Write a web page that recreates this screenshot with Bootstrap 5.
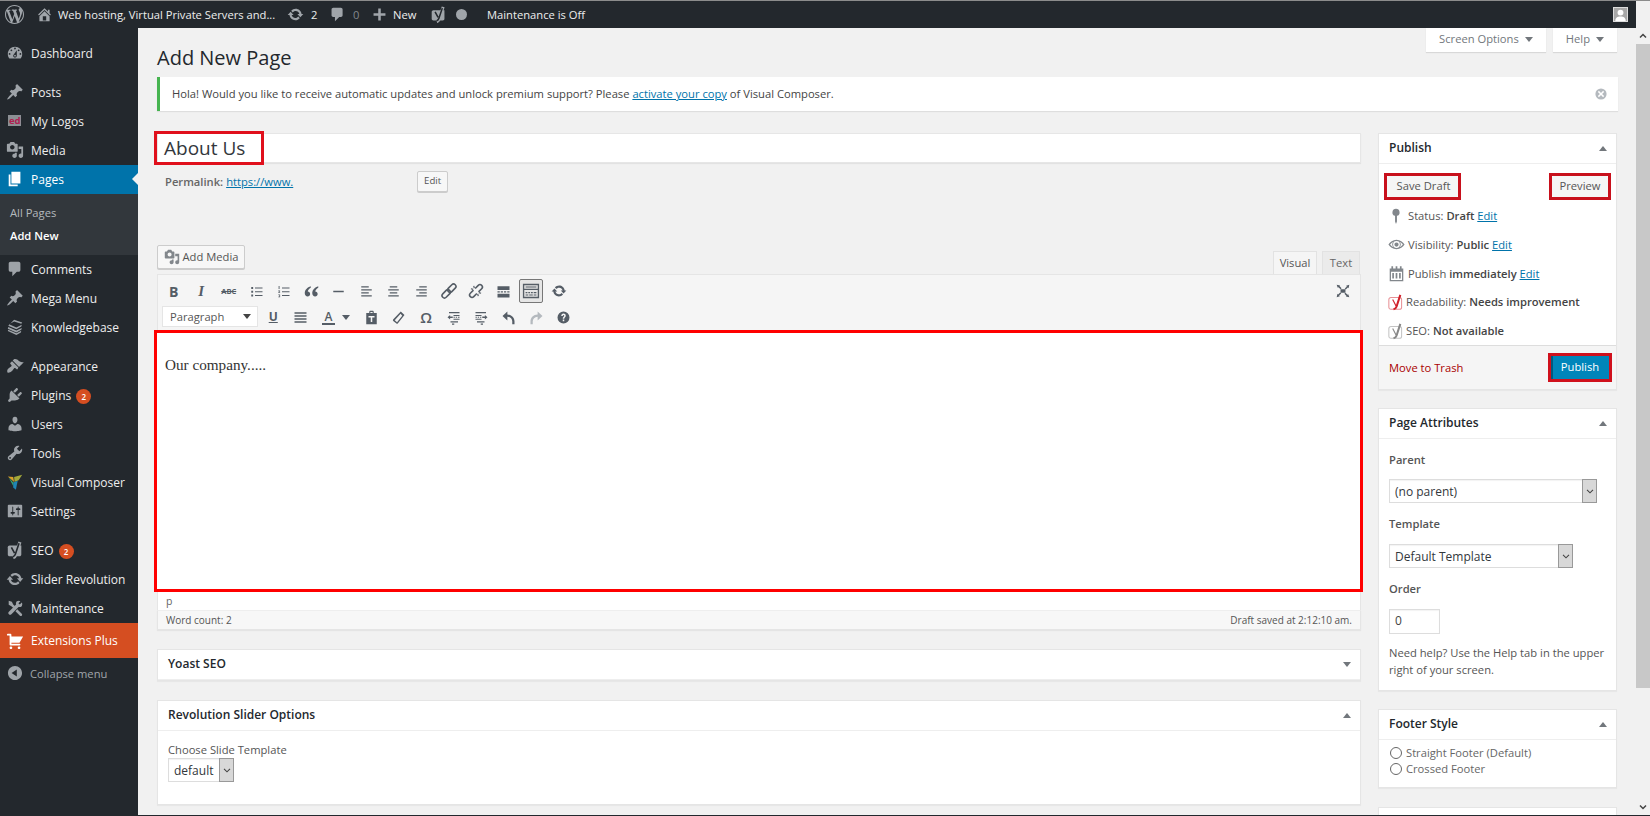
<!DOCTYPE html>
<html lang="en"><head><meta charset="utf-8"><title>Add New Page</title>
<link href="https://cdn.jsdelivr.net/npm/bootstrap@5.3.0/dist/css/bootstrap.min.css" rel="stylesheet">
<style>
html,body{height:816px;overflow:hidden}
body{background:#f1f1f1;color:#444;font:11.2px/1.4 "Open Sans",sans-serif;display:flex;flex-direction:column}
a{color:#0073aa}
svg{display:block;flex:none}
.topline{height:1px;background:#8c8c8c;flex:none}
.botline{height:1px;background:#23282d;flex:none}
.adminbar{height:27px;background:#23282d;color:#eee;flex:none;margin-right:14px;white-space:nowrap;font-size:11.2px}
.adminbar svg{fill:#a0a5aa}
.midrow{flex:1;min-height:0}
.side{width:138px;flex:none;background:#23282d;color:#eee;font-size:12px;padding-top:11px}
.mi{height:29px;padding:2px 0 0 31px;position:relative;white-space:nowrap}
.mi svg{position:absolute;left:6px;top:5px;fill:#9ea3a8}
.mi.sep{margin-top:10px}
.mi.act{background:#0073aa;color:#fff}
.mi.act svg{fill:#fff}
.mi.act::after{content:"";position:absolute;right:0;top:8px;border:6.5px solid transparent;border-right-color:#f1f1f1;border-left:0}
.subm{background:#32373c;height:61px;padding:7px 10px;font-size:11.2px;color:#b4b9be}
.subm div{height:23px;line-height:23px}
.subm .on{color:#fff;font-weight:600}
.mi.ext{background:#d54e21;color:#fff;height:35px}
.mi.ext svg{fill:#fff;top:9px}
.coll{color:#a0a5aa;font-size:11.2px;height:30px;padding-left:30px}
.coll svg{top:6px}
.bdg{background:#d54e21;color:#fff;width:15px;height:15px;border-radius:50%;font-size:8px;font-weight:600;margin-left:5px;display:inline-flex;align-items:center;justify-content:center}
.mainp{flex:1;min-width:0;padding:0 18px 0 19px;overflow:hidden}
.sbar{width:14px;flex:none;background:#f1f1f1}
.sthumb{height:644px;background:#c8c8c8}
.sarrow{height:16px;color:#444}
.sgap{flex:1}
.tabb{background:#fff;height:24px;color:#72777c;box-shadow:0 1px 1px rgba(0,0,0,.1);padding:0 13px 2px;gap:6px}
.tri{width:0;height:0;border:4.5px solid transparent;border-top:5px solid #72777c;border-bottom:0}
.tabwrap{gap:7px;padding-right:1px}
.pgh{font-size:20px;line-height:26px;font-weight:400;color:#23282d;margin:0 0 6px;padding-top:17px}
.noti{height:34px;background:#fff;border-left:3px solid #46b450;box-shadow:0 1px 1px rgba(0,0,0,.08);padding:0 10px 0 12px;margin-bottom:22px}
.noti svg{fill:#b4b9be;margin-left:auto}
.cols{gap:17px;align-items:flex-start}
.lc{width:1204px;flex:none}
.rc{width:239px;flex:none}
.titl{height:30px;background:#fff;box-shadow:0 1px 1px rgba(0,0,0,.06);border:1px solid #e6e6e6}
.titlred{border:3px solid #e0101c;height:34px;width:110px;margin:-3px 0 0 -4px;font-size:19px;line-height:28px;padding-left:7px;color:#32373c;flex:none}
.perm{height:21px;margin:8px 0 53px;padding-left:8px;color:#555}
.perm b{font-weight:600;color:#666}
.perm a{margin-left:3px;width:191px}
.wbtn{background:#f7f7f7;border:1px solid #ccc;box-shadow:0 1px 0 #ccc;color:#555;border-radius:2px;font-size:11.2px;padding:0;--bs-btn-hover-bg:#f7f7f7}
.ebtn{font-size:9.6px;width:31px;height:21px}
.mrow{height:29px;align-items:flex-start}
.mbtn{width:88px;height:24px;gap:3px;font-size:11.2px}
.mbtn svg{fill:#82878c}
.etabs{margin-left:auto;margin-top:6px;gap:5px;margin-right:1px}
.etab{height:23px;width:38px;background:#ebebeb;border:1px solid #e2e2e2;border-bottom:0;color:#666;font-size:11.2px}
.etab.on{width:44px;background:#f5f5f5;color:#555}
.tbar{height:56px;background:#f5f5f5;border:1px solid #e5e5e5;border-bottom:0;padding:4px 3px 0 2px}
.trow{height:24px}
.tb{width:27.5px;height:24px;color:#555d66;flex:none}
.tb svg{fill:#555d66}
.tb b{font:700 14px "Liberation Serif",serif}
.tb.act{border:1px solid #777;background:#e6e6e6;border-radius:2px;width:24px;margin:0 1.8px}
.pick{width:96px;height:21px;margin:1px 1.5px 0 2px;background:#fff;border:1px solid #e5e5e5;padding:0 6px 0 7px;font-size:11.2px;color:#555}
.edred{height:262px;border:3px solid #f00;background:#fff;margin:0 -2px 0 -3px;padding:21px 8px;font:15.2px/1.5 "Liberation Serif",serif;color:#333}
.pathr{height:18px;background:#fff;border-inline:1px solid #e5e5e5;padding-left:8px;font-size:10.5px;color:#666}
.wcnt{height:20px;background:#f7f7f7;border:1px solid #e5e5e5;border-top:1px solid #eee;box-shadow:0 1px 1px rgba(0,0,0,.05);padding:0 8px;font-size:10px;color:#555;margin-bottom:19px}
.mbox{border:1px solid #e5e5e5;border-radius:0;box-shadow:0 1px 1px rgba(0,0,0,.04);background:#fff}
.mhead{height:30px;background:#fff;border:0;border-bottom:1px solid #eee;border-radius:0!important;padding:0 10px;font-size:12px;font-weight:600;color:#23282d}
.mhead i{margin-left:auto;margin-right:-1px;width:0;height:0;border:4.5px solid transparent;border-bottom:5px solid #72777c;border-top:0}
.mhead i.dn{border-bottom:0;border-top:5px solid #72777c}
.lab{font-weight:600;color:#555;font-size:11.2px}
.selx{height:24px;border:1px solid #ddd;background:#fff;box-shadow:inset 0 1px 1px rgba(0,0,0,.05)}
.selx select{appearance:none;border:0;background:transparent;flex:1;min-width:0;font:12px "Open Sans",sans-serif;color:#32373c;padding:0 5px;height:100%;outline:0}
.selx span{width:15px;background:#d8d8d8;border:1px solid #999;margin:-1px -1px -1px 0;flex:none}
.redb{border:3px solid #c8101c;height:27px;padding:0}
.redb .wbtn{height:100%;border:0;box-shadow:none;background:#f5f5f5;display:flex;align-items:center;justify-content:center;width:100%}
.psrow{height:29px;padding-left:8px;gap:3px;font-size:11.2px;color:#555}
.psrow svg{fill:#82878c}
.psrow b{font-weight:600;color:#444}
.psic{width:18px;flex:none;display:flex;justify-content:center}
.pfoot{height:44px;background:#f5f5f5;border-top:1px solid #ddd;padding:0 4px 0 10px}
.pfoot a{color:#a00;text-decoration:none}
.pub{width:64px;height:29px;border:3px solid #d0101c;background:#0085ba;color:#fff;font-size:11.2px;border-radius:0;padding:0;--bs-btn-hover-bg:#0085ba;--bs-btn-hover-color:#fff;box-shadow:inset 2px 0 0 #005a80}
.radr{height:16px;gap:4px;color:#666}
.radr input{appearance:none;width:12px;height:12px;border:1px solid #666;border-radius:50%;background:#fff;margin:0;flex:none}
.avt{margin-right:8px;width:15px;height:15px;background:#a8a8a8;border:1px solid #ddd;overflow:hidden}
</style></head><body>
<svg width="0" height="0" style="position:absolute"><defs>
<symbol id="i-wp" viewBox="0 0 20 20"><path d="M20 10c0-5.510-4.490-10-10-10C4.480 0 0 4.490 0 10c0 5.520 4.480 10 10 10 5.510 0 10-4.480 10-10zM7.780 15.370L4.370 6.220c.550-.020 1.170-.080 1.170-.080.500-.060.440-1.130-.060-1.110 0 0-1.450.110-2.370.110-.180 0-.370 0-.580-.010C4.120 2.690 6.870 1.070 10 1.070c2.330 0 4.450.870 6.050 2.340-.680-.110-1.650.390-1.650 1.580 0 .740.450 1.360.900 2.100.350.610.550 1.360.550 2.460 0 1.490-1.400 5-1.400 5l-3.030-8.370c.540-.020.820-.170.820-.170.500-.050.440-1.250-.060-1.220 0 0-1.440.120-2.380.120-.870 0-2.330-.120-2.330-.120-.500-.030-.560 1.200-.060 1.220l.920.080 1.260 3.410zM17.410 10c.240-.640.740-1.870.430-4.250.700 1.290 1.050 2.710 1.050 4.250 0 3.290-1.730 6.240-4.400 7.780.970-2.590 1.940-5.200 2.920-7.780zM6.100 18.090C3.120 16.650 1.110 13.530 1.110 10c0-1.300.230-2.480.720-3.590C3.250 10.300 4.670 14.200 6.100 18.090zm4.030-6.630l2.580 6.980c-.860.290-1.740.450-2.710.450-.810 0-1.600-.110-2.340-.340z"/></symbol>
<symbol id="i-home" viewBox="0 0 20 20"><path d="M16 8.500l1.530 1.530-1.060 1.060L10 4.620l-6.470 6.470-1.060-1.060L10 2.500l4 4v-2h2v4zm-6-2.460l6 5.990V18H4v-5.970zM12 17v-5H8v5h4z"/></symbol>
<symbol id="i-upd" viewBox="0 0 20 20"><path d="M10.200 3.280c3.530 0 6.430 2.610 6.920 6h2.080l-3.500 4-3.500-4h2.320c-.450-1.970-2.210-3.450-4.320-3.450-1.450 0-2.730.710-3.540 1.780L4.950 5.660C6.230 4.200 8.110 3.280 10.200 3.280zm-.400 13.440c-3.520 0-6.430-2.610-6.920-6H.800l3.500-4c1.170 1.330 2.330 2.670 3.500 4H5.480c.450 1.970 2.210 3.450 4.320 3.450 1.450 0 2.730-.710 3.540-1.780l1.710 1.950c-1.280 1.460-3.150 2.380-5.250 2.380z"/></symbol>
<symbol id="i-com" viewBox="0 0 20 20"><path d="M5 2h9c1.100 0 2 .900 2 2v7c0 1.100-.900 2-2 2h-2l-5 5v-5H5c-1.100 0-2-.900-2-2V4c0-1.100.900-2 2-2z"/></symbol>
<symbol id="i-plus" viewBox="0 0 20 20"><path d="M8.500 3h3v5.500H17v3h-5.500V17h-3v-5.500H3v-3h5.500z"/></symbol>
<symbol id="i-yo" viewBox="0 0 20 20"><path fill="#a0a5aa" d="M4 5h13v10c0 1.100-.900 2-2 2H4c-1.100 0-2-.900-2-2V7c0-1.100.900-2 2-2z"/><path fill="none" stroke="#a0a5aa" stroke-width="3.500" d="M15.500 1l-5 15c-.400 1.200-1 2-2.500 2.500"/><path fill="none" stroke="#23282d" stroke-width="1.800" d="M6 7l3.500 6.500M14.500 2.500L10.500 14.500c-.500 1.500-1.200 2.500-2.800 3"/></symbol>
<symbol id="i-dash" viewBox="0 0 20 20"><path d="M3.760 16h12.480c1.100-1.370 1.760-3.110 1.760-5 0-4.420-3.580-8-8-8s-8 3.580-8 8c0 1.890.660 3.630 1.760 5zM10 4c.550 0 1 .450 1 1s-.450 1-1 1-1-.450-1-1 .450-1 1-1zM6 6c.550 0 1 .450 1 1s-.450 1-1 1-1-.450-1-1 .450-1 1-1zm8 0c.550 0 1 .450 1 1s-.450 1-1 1-1-.450-1-1 .450-1 1-1zm-5.370 5.550L12 7v6c0 1.100-.900 2-2 2s-2-.900-2-2c0-.570.240-1.080.630-1.450zM4 10c.550 0 1 .450 1 1s-.450 1-1 1-1-.450-1-1 .450-1 1-1zm12 0c.550 0 1 .450 1 1s-.450 1-1 1-1-.450-1-1 .450-1 1-1zm-5 3c0-.550-.450-1-1-1s-1 .450-1 1 .450 1 1 1 1-.450 1-1z"/></symbol>
<symbol id="i-pin" viewBox="0 0 20 20"><path d="M10.440 3.020l1.820-1.820 6.360 6.350-1.830 1.820c-1.050-.680-2.480-.570-3.410.360l-.750.750c-.920.930-1.040 2.350-.350 3.410l-1.830 1.820-2.410-2.410-2.800 2.790c-.420.420-3.380 2.710-3.800 2.290s1.860-3.390 2.280-3.810l2.790-2.790L4.100 9.360l1.830-1.820c1.050.690 2.480.570 3.400-.360l.750-.750c.930-.920 1.050-2.350.360-3.410z"/></symbol>
<symbol id="i-media" viewBox="0 0 20 20"><path d="M13 11V4c0-.550-.450-1-1-1h-1.670L9 1H5L3.670 3H2c-.550 0-1 .450-1 1v7c0 .550.450 1 1 1h10c.550 0 1-.450 1-1zM7 4.500c1.380 0 2.500 1.120 2.500 2.500S8.380 9.500 7 9.500 4.500 8.380 4.500 7 5.620 4.500 7 4.500zM14 6h5v10.500c0 1.380-1.120 2.500-2.500 2.500S14 17.880 14 16.500s1.120-2.500 2.500-2.500c.170 0 .340.020.500.050V9h-3V6zm-4 8.050V13h2v3.500c0 1.380-1.120 2.500-2.500 2.500S7 17.880 7 16.500 8.120 14 9.500 14c.170 0 .340.020.500.050z"/></symbol>
<symbol id="i-page" viewBox="0 0 20 20"><path d="M6 15V2h10v13H6zm-1 1h8v2H3V5h2v11z"/></symbol>
<symbol id="i-app" viewBox="0 0 20 20"><path d="M14.480 11.060L7.410 3.990l1.500-1.500c.500-.560 2.300-.470 3.510.320 1.210.800 1.430 1.280 2.910 2.100 1.180.640 2.450 1.260 4.450.850zm-.710.710L6.700 4.700 4.930 6.470c-.390.390-.390 1.020 0 1.410l1.060 1.060c.390.390.390 1.030 0 1.420-.600.600-1.430 1.110-2.210 1.690-.350.260-.700.530-1.010.840C1.430 13.230.910 16.440 1.700 17.230c.790.790 3.500-.260 4.840-1.600.310-.310.580-.660.850-1.010.570-.780 1.080-1.610 1.690-2.210.390-.390 1.020-.390 1.410 0l1.060 1.060c.390.390 1.020.390 1.410 0z"/></symbol>
<symbol id="i-plug" viewBox="0 0 20 20"><path d="M13.110 4.360L9.870 7.600 8 5.730l3.240-3.240c.350-.340 1.050-.200 1.560.320.520.510.660 1.210.310 1.550zm-8 1.770l.910-1.120 9.010 9.010-1.190.840c-.710.710-2.630 1.160-3.820 1.160H6.140L4.900 17.260c-.590.590-1.540.590-2.120 0-.590-.580-.590-1.530 0-2.120l1.240-1.240v-3.880c0-1.130.400-3.190 1.090-3.890zm7.260 3.970l3.240-3.240c.340-.350 1.040-.210 1.550.310.520.510.660 1.210.310 1.550l-3.240 3.250z"/></symbol>
<symbol id="i-user" viewBox="0 0 20 20"><path d="M10 9.250c-2.270 0-2.730-3.440-2.730-3.440C7 4.020 7.820 2 9.970 2c2.160 0 2.980 2.020 2.710 3.810 0 0-.410 3.440-2.680 3.440zm0 2.570L12.720 10c2.390 0 4.520 2.330 4.520 4.530v2.490s-3.650 1.130-7.240 1.130c-3.650 0-7.240-1.130-7.240-1.130v-2.490c0-2.250 1.940-4.480 4.470-4.480z"/></symbol>
<symbol id="i-tool" viewBox="0 0 20 20"><path d="M16.680 9.770c-1.340 1.340-3.300 1.670-4.950.990l-5.410 6.520c-.990.990-2.590.990-3.580 0s-.990-2.590 0-3.570l6.520-5.420c-.680-1.650-.350-3.610.990-4.950 1.280-1.280 3.120-1.620 4.720-1.060l-2.890 2.890 2.820 2.820 2.860-2.870c.530 1.580.180 3.390-1.080 4.650zM3.810 16.210c.400.390 1.040.390 1.430 0 .400-.400.400-1.040 0-1.430-.390-.400-1.030-.400-1.430 0-.390.390-.390 1.030 0 1.430z"/></symbol>
<symbol id="i-set" viewBox="0 0 20 20"><path d="M18 16V4c0-.550-.450-1-1-1H3c-.550 0-1 .450-1 1v12c0 .550.450 1 1 1h14c.550 0 1-.450 1-1zM8 11h1c.550 0 1 .450 1 1s-.450 1-1 1H8v1.500c0 .280-.220.500-.500.500s-.500-.220-.500-.500V13H6c-.550 0-1-.450-1-1s.450-1 1-1h1V5.500c0-.280.220-.500.500-.500s.500.220.500.500V11zm5-2h-1c-.550 0-1-.450-1-1s.450-1 1-1h1V5.500c0-.280.220-.500.500-.500s.500.220.500.500V7h1c.550 0 1 .450 1 1s-.450 1-1 1h-1v5.500c0 .280-.220.500-.500.500s-.500-.220-.500-.500V9z"/></symbol>
<symbol id="i-cross" viewBox="0 0 20 20"><path d="M3 2l3.500 1 1.500 3 2 2-2 2-2-2-3-1.500zM12 2.500c1.500-.800 3-.800 4 0l-2.200 2.200 1.500 1.500L17.500 4c.800 1 .800 2.500 0 4-1 1-2.400 1.200-3.500.800L6 17c-.800.800-2 .800-2.800 0s-.800-2 0-2.800l8-8c-.400-1.300 0-2.700.800-3.700zM12.500 11.500l5 5c.600.600.600 1.500 0 2s-1.400.500-2 0l-5-5z"/></symbol>
<symbol id="i-cart" viewBox="0 0 20 20"><path d="M6 13h9c.550 0 1 .450 1 1s-.450 1-1 1H5c-.550 0-1-.450-1-1V4H2c-.550 0-1-.450-1-1s.450-1 1-1h3c.550 0 1 .450 1 1v2h13l-4 7H6v1zm-.500 3c.830 0 1.500.670 1.500 1.500S6.330 19 5.500 19 4 18.330 4 17.500 4.670 16 5.500 16zm9 0c.830 0 1.500.670 1.500 1.500s-.670 1.500-1.500 1.500-1.500-.670-1.500-1.500.670-1.500 1.500-1.500z"/></symbol>
<symbol id="i-coll" viewBox="0 0 20 20"><path d="M10 2.160c4.330 0 7.840 3.510 7.840 7.840s-3.510 7.840-7.840 7.840S2.160 14.330 2.160 10 5.710 2.160 10 2.160zm2 11.720V6.120L6.180 9.970z"/></symbol>
<symbol id="i-x" viewBox="0 0 20 20"><path fill-rule="evenodd" d="M10 2a8 8 0 1 1 0 16 8 8 0 0 1 0-16zM7 5.500L5.500 7l3 3-3 3L7 14.500l3-3 3 3 1.500-1.500-3-3 3-3L13 5.500l-3 3z"/></symbol>
<symbol id="t-ul" viewBox="0 0 20 20"><path d="M3 4h2.500v2.500H3zM8 4.500h10v1.500H8zM3 9h2.500v2.500H3zM8 9.500h10V11H8zM3 14h2.500v2.500H3zM8 14.500h10V16H8z"/></symbol>
<symbol id="t-ol" viewBox="0 0 20 20"><path d="M3.500 2.500h1.200v4H3.500zM3 8.500h2.500v1l-1.300 1.200h1.300v.8H3v-1l1.300-1.200H3zM3 14h2.500v3.800H3v-.8h1.500v-.7H3.500v-.6h1v-.9H3zM8 4.500h10v1.500H8zM8 9.500h10V11H8zM8 14.500h10V16H8z"/></symbol>
<symbol id="t-q" viewBox="0 0 20 20"><path d="M9 3C4.500 4.500 1 8 1 12c0 2.800 1.700 4.500 3.800 4.500 2 0 3.400-1.500 3.400-3.300 0-1.900-1.400-3.200-3.200-3.200.200-2 1.800-3.800 4-5zM19 3c-4.500 1.500-8 5-8 9 0 2.800 1.700 4.500 3.800 4.500 2 0 3.400-1.500 3.400-3.300 0-1.900-1.400-3.200-3.200-3.200.200-2 1.800-3.800 4-5z"/></symbol>
<symbol id="t-hr" viewBox="0 0 20 20"><path d="M3 9h14v2H3z"/></symbol>
<symbol id="t-al" viewBox="0 0 20 20"><path d="M3 3h10v1.600H3zM3 7h14v1.600H3zM3 11h10v1.600H3zM3 15h14v1.600H3z"/></symbol>
<symbol id="t-ac" viewBox="0 0 20 20"><path d="M5 3h10v1.600H5zM3 7h14v1.600H3zM5 11h10v1.600H5zM3 15h14v1.600H3z"/></symbol>
<symbol id="t-ar" viewBox="0 0 20 20"><path d="M7 3h10v1.600H7zM3 7h14v1.600H3zM7 11h10v1.600H7zM3 15h14v1.600H3z"/></symbol>
<symbol id="t-aj" viewBox="0 0 20 20"><path d="M2 3h16v2H2zM2 7h16v2H2zM2 11h16v2H2zM2 15h16v2H2z"/></symbol>
<symbol id="t-link" viewBox="0 0 20 20"><g fill="none" stroke="#555d66" stroke-width="2" transform="rotate(-45 10 10)"><rect x="-1" y="7" width="12" height="6" rx="3"/><rect x="9" y="7" width="12" height="6" rx="3"/></g></symbol>
<symbol id="t-unl" viewBox="0 0 20 20"><g fill="none" stroke="#555d66" stroke-width="2" transform="rotate(-45 10 10)"><path d="M8.500 7H3a3 3 0 0 0 0 6h5.500M11.500 7H17a3 3 0 0 1 0 6h-5.500"/><path stroke-width="1.500" d="M7.500 3.500l1.500 2.500M12.500 3.500L11 6M7.500 16.500L9 14M12.500 16.500L11 14"/></g></symbol>
<symbol id="t-more" viewBox="0 0 20 20"><path d="M2 3h16v5H2zM2 13h16v5H2zM2 9.800h3v1.400H2zM6.300 9.800h3v1.400h-3zM10.600 9.800h3v1.400h-3zM15 9.800h3v1.400h-3z"/></symbol>
<symbol id="t-kb" viewBox="0 0 20 20"><path fill-rule="evenodd" d="M1 2h18v16H1zM2.500 3.500v4h15v-4zM2.500 9v7.500h15V9zM4 5h12v1H4zM4 11h2v1.500H4zM7 11h2v1.500H7zM10 11h2v1.500h-2zM13 11h3v1.500h-3zM4 13.800h3v1.200H4zM8 13.800h4v1.200H8zM13 13.800h3v1.200h-3z"/></symbol>
<symbol id="t-paste" viewBox="0 0 20 20"><path fill-rule="evenodd" d="M3 4h4V2.500C7 1.700 7.700 1 8.500 1h3c.800 0 1.500.700 1.500 1.500V4h4v15H3zM8.500 2.500V4h3V2.500zM6 8v2h3v6h2v-6h3V8z"/></symbol>
<symbol id="t-erase" viewBox="0 0 20 20"><path fill-rule="evenodd" d="M13 2l5 4.500-9 11.500c-.500.600-1.200.500-1.700.1L3 14.500c-.600-.500-.700-1.100-.200-1.700zM12.800 5L5 13.500l3 2.800 7-8.800z"/></symbol>
<symbol id="t-out" viewBox="0 0 20 20"><path d="M4 2.500h14v1.800H4zM10 6.500h8v1.600h-8zM10 11.500h8v1.600h-8zM10 9h1.800v1.400H10zM13 9h1.800v1.400H13zM16 9h2v1.400h-2zM6 15h10v1.800H6zM8 18h3v1.500H8zM2 9.700l3.500-3v2H9v2H5.500v2z"/></symbol>
<symbol id="t-ind" viewBox="0 0 20 20"><path d="M2 2.500h14v1.800H2zM2 6.500h8v1.600H2zM2 11.500h8v1.600H2zM2 9h1.800v1.400H2zM5 9h1.800v1.400H5zM8 9h1.800v1.400H8zM4 15h10v1.800H4zM9 18h3v1.500H9zM18 9.700l-3.500-3v2H11v2h3.500v2z"/></symbol>
<symbol id="t-undo" viewBox="0 0 20 20"><path d="M2 8l6.500-6v4c5.500.300 9.500 4 9.500 9v4h-3v-4c0-3-2.500-5.500-6.500-6v5z"/></symbol>
<symbol id="t-redo" viewBox="0 0 20 20"><path d="M18 8l-6.500-6v4C6 6.300 2 10 2 15v4h3v-4c0-3 2.500-5.500 6.500-6v5z"/></symbol>
<symbol id="t-help" viewBox="0 0 20 20"><path fill-rule="evenodd" d="M10 2a8 8 0 1 1 0 16 8 8 0 0 1 0-16zM7 8h2c0-.900.400-1.300 1-1.300s1 .400 1 1c0 1.300-2 1.500-2 3.800h2c0-1.800 2-2 2-4 0-1.600-1.300-2.800-3-2.800-1.900 0-3 1.300-3 3.300zM9 12.800V15h2v-2.200z"/></symbol>
<symbol id="t-full" viewBox="0 0 20 20"><path d="M6.500 7.500h7v5h-7zM1 1l5 1-1 1 3 3-1.500 1.500-3-3-1 1zM19 1l-1 5-1-1-3 3-1.500-1.500 3-3-1-1zM1 19l1-5 1 1 3-3 1.500 1.500-3 3 1 1zM19 19l-5-1 1-1-3-3 1.500-1.500 3 3 1-1z"/></symbol>
<symbol id="p-pin" viewBox="0 0 20 20"><path d="M10 1a4.500 4.500 0 0 1 1.200 8.830V17l-1.200 3-1.200-3V9.830A4.500 4.500 0 0 1 10 1z"/></symbol>
<symbol id="p-eye" viewBox="0 0 20 20"><path fill-rule="evenodd" d="M10 4.500c4.200 0 7.700 2.800 9.500 5.500-1.800 2.700-5.300 5.500-9.500 5.500S2.300 12.700.5 10C2.300 7.300 5.800 4.500 10 4.500zM10 6a4 4 0 1 0 0 8 4 4 0 0 0 0-8zM2.500 10c1 1.300 2.300 2.400 3.800 3.200A5 5 0 0 1 6.300 6.800C4.800 7.600 3.500 8.700 2.500 10zm11.200-3.200a5 5 0 0 1 0 6.400c1.500-.800 2.800-1.900 3.800-3.200-1-1.300-2.300-2.400-3.800-3.200zM10 7.500a2.500 2.500 0 1 1 0 5 2.500 2.500 0 0 1 0-5z"/></symbol>
<symbol id="p-cal" viewBox="0 0 20 20"><path fill-rule="evenodd" d="M2 4h2V1.500h2V4h3V1.500h2V4h3V1.500h2V4h2v15H2zM3.500 8v9.500h13V8zM5 9.500h2v6.500H5zM9 9.500h2v6.500H9zM13 9.500h2v6.500h-2z"/></symbol>
<symbol id="p-y" viewBox="0 0 20 20"><rect x="1" y="4" width="15" height="14" rx="2.500" fill="none" stroke="currentColor" stroke-opacity=".5" stroke-width="1.200"/><path fill="none" stroke="currentColor" stroke-width="1.300" d="M5.500 6.500l4 7.500"/><path fill="none" stroke="currentColor" stroke-width="2.400" d="M14.500 1L10 15c-.500 1.500-1.500 2.500-3.500 3"/></symbol>
<symbol id="i-chev" viewBox="0 0 10 10"><path fill="none" stroke="#444" stroke-width="1.100" d="M2 3.800L5 6.800 8 3.800"/></symbol>
</defs></svg>

<div class="topline"></div>
<div class="adminbar d-flex align-items-center position-relative">
 <svg width="19" height="19" style="margin-left:5px"><use href="#i-wp"/></svg>
 <svg width="17" height="17" style="margin-left:12px"><use href="#i-home"/></svg>
 <span style="margin-left:5px;width:217px">Web hosting, Virtual Private Servers and...</span>
 <svg width="17" height="17" style="margin-left:12px"><use href="#i-upd"/></svg>
 <span style="margin-left:7px;width:10px">2</span>
 <svg width="17" height="17" style="margin-left:8px"><use href="#i-com"/></svg>
 <span style="margin-left:7px;width:8px;color:#82878c">0</span>
 <svg width="17" height="17" style="margin-left:10px"><use href="#i-plus"/></svg>
 <span style="margin-left:5px;width:24px">New</span>
 <svg width="17" height="17" style="margin-left:13px"><use href="#i-yo"/></svg>
 <svg width="11" height="11" viewBox="0 0 10 10" style="margin-left:9px"><circle cx="5" cy="5" r="5"/></svg>
 <span style="margin-left:20px">Maintenance is Off</span>
 <span class="avt ms-auto d-flex align-items-end"><svg width="13" height="13" viewBox="0 0 20 20" style="fill:#fff"><circle cx="10" cy="7" r="4.500"/><path d="M2 20c0-5 3-7 8-7s8 2 8 7z"/></svg></span>
</div>
<div class="midrow d-flex">
 <nav class="side">
  <div class="mi d-flex align-items-center"><svg width="18" height="18"><use href="#i-dash"/></svg>Dashboard</div>
  <div class="mi sep d-flex align-items-center"><svg width="18" height="18"><use href="#i-pin"/></svg>Posts</div>
  <div class="mi d-flex align-items-center"><svg width="18" height="18" viewBox="0 0 18 18"><rect x="2" y="3" width="13" height="11" fill="#8c8f94"/><text x="3" y="12" font-size="9.500" font-weight="700" font-family="Open Sans" style="fill:#b01e50">ed</text></svg>My Logos</div>
  <div class="mi d-flex align-items-center"><svg width="18" height="18"><use href="#i-media"/></svg>Media</div>
  <div class="mi act d-flex align-items-center"><svg width="18" height="18"><use href="#i-page"/></svg>Pages</div>
  <div class="subm"><div>All Pages</div><div class="on">Add New</div></div>
  <div class="mi d-flex align-items-center"><svg width="18" height="18"><use href="#i-com"/></svg>Comments</div>
  <div class="mi d-flex align-items-center"><svg width="18" height="18"><use href="#i-pin"/></svg>Mega Menu</div>
  <div class="mi d-flex align-items-center"><svg width="18" height="18" viewBox="0 0 20 20"><path d="M9 2l9 3-1 1.500L9 4 3.500 7l8 3.500 6-3-.500 2-5.500 3-9-4zM2.500 10l9 4 6-3-.500 2-5.500 3-9.500-4zM2.500 13l9 4 5.500-2.800-.500 2-5 2.800-9.500-4.500z"/></svg>Knowledgebase</div>
  <div class="mi sep d-flex align-items-center"><svg width="18" height="18"><use href="#i-app"/></svg>Appearance</div>
  <div class="mi d-flex align-items-center"><svg width="18" height="18"><use href="#i-plug"/></svg>Plugins<span class="bdg">2</span></div>
  <div class="mi d-flex align-items-center"><svg width="18" height="18"><use href="#i-user"/></svg>Users</div>
  <div class="mi d-flex align-items-center"><svg width="18" height="18"><use href="#i-tool"/></svg>Tools</div>
  <div class="mi d-flex align-items-center"><svg width="18" height="18" viewBox="0 0 20 20"><path style="fill:#d9a12a" d="M2 4l6 .500 1 5.500z"/><path style="fill:#a3a83a" d="M9 4.500l9-2.500-4 6-4.500 2z"/><path style="fill:#1f86b5" d="M8 10.500l5-2-2 10-3-2.500z"/><path style="fill:#3aa36f" d="M3 5l5 5.500v4z"/></svg>Visual Composer</div>
  <div class="mi d-flex align-items-center"><svg width="18" height="18"><use href="#i-set"/></svg>Settings</div>
  <div class="mi sep d-flex align-items-center"><svg width="18" height="18"><use href="#i-yo"/></svg>SEO<span class="bdg">2</span></div>
  <div class="mi d-flex align-items-center"><svg width="18" height="18"><use href="#i-upd"/></svg>Slider Revolution</div>
  <div class="mi d-flex align-items-center"><svg width="18" height="18"><use href="#i-cross"/></svg>Maintenance</div>
  <div class="mi ext d-flex align-items-center"><svg width="18" height="18"><use href="#i-cart"/></svg>Extensions Plus</div>
  <div class="mi coll d-flex align-items-center"><svg width="18" height="18"><use href="#i-coll"/></svg>Collapse menu</div>
 </nav>
 <main class="mainp">
  <div class="tabwrap d-flex float-end">
   <div class="tabb d-flex align-items-center">Screen Options <span class="tri"></span></div>
   <div class="tabb d-flex align-items-center">Help <span class="tri"></span></div>
  </div>
  <h1 class="pgh">Add New Page</h1>
  <div class="noti d-flex align-items-center">
   <span>Hola! Would you like to receive automatic updates and unlock premium support? Please <a href="#">activate your copy</a> of Visual Composer.</span>
   <svg width="14" height="14"><use href="#i-x"/></svg>
  </div>
  <div class="cols d-flex">
   <div class="lc">
    <div class="titl d-flex"><div class="titlred">About Us</div></div>
    <div class="perm d-flex align-items-center"><b>Permalink:</b><a href="#">https://www.</a><button class="btn wbtn ebtn">Edit</button></div>
    <div class="mrow d-flex">
     <button class="btn wbtn mbtn d-flex align-items-center justify-content-center"><svg width="16" height="16"><use href="#i-media"/></svg>Add Media</button>
     <div class="etabs d-flex"><div class="etab on d-flex align-items-center justify-content-center">Visual</div><div class="etab d-flex align-items-center justify-content-center">Text</div></div>
    </div>
    <div class="tbar">
     <div class="trow d-flex">
      <div class="tb d-flex align-items-center justify-content-center"><b style="font-family:'Open Sans'">B</b></div>
      <div class="tb d-flex align-items-center justify-content-center"><b style="font-family:'Liberation Serif';font-style:italic;font-size:15px">I</b></div>
      <div class="tb d-flex align-items-center justify-content-center"><s style="font-size:7.500px;font-weight:700">ABC</s></div>
      <div class="tb d-flex align-items-center justify-content-center"><svg width="15" height="15"><use href="#t-ul"/></svg></div>
      <div class="tb d-flex align-items-center justify-content-center"><svg width="15" height="15"><use href="#t-ol"/></svg></div>
      <div class="tb d-flex align-items-center justify-content-center"><svg width="15" height="15"><use href="#t-q"/></svg></div>
      <div class="tb d-flex align-items-center justify-content-center"><svg width="15" height="15"><use href="#t-hr"/></svg></div>
      <div class="tb d-flex align-items-center justify-content-center"><svg width="15" height="15"><use href="#t-al"/></svg></div>
      <div class="tb d-flex align-items-center justify-content-center"><svg width="15" height="15"><use href="#t-ac"/></svg></div>
      <div class="tb d-flex align-items-center justify-content-center"><svg width="15" height="15"><use href="#t-ar"/></svg></div>
      <div class="tb d-flex align-items-center justify-content-center"><svg width="16" height="16"><use href="#t-link"/></svg></div>
      <div class="tb d-flex align-items-center justify-content-center"><svg width="16" height="16"><use href="#t-unl"/></svg></div>
      <div class="tb d-flex align-items-center justify-content-center"><svg width="15" height="15"><use href="#t-more"/></svg></div>
      <div class="tb act d-flex align-items-center justify-content-center"><svg width="18" height="18"><use href="#t-kb"/></svg></div>
      <div class="tb d-flex align-items-center justify-content-center"><svg width="16" height="16"><use href="#i-upd"/></svg></div>
      <div class="tb ms-auto d-flex align-items-center justify-content-center"><svg width="14" height="14"><use href="#t-full"/></svg></div>
     </div>
     <div class="trow d-flex" style="margin-top:2px">
      <div class="pick d-flex align-items-center justify-content-between">Paragraph<span class="tri" style="border-top-color:#444"></span></div>
      <div class="tb d-flex align-items-center justify-content-center"><u style="font-weight:700;font-size:12px">U</u></div>
      <div class="tb d-flex align-items-center justify-content-center"><svg width="15" height="15"><use href="#t-aj"/></svg></div>
      <div class="tb d-flex align-items-center justify-content-center" style="width:43px;gap:7px"><span style="font-weight:600;font-size:12px;border-bottom:2px solid #555d66;line-height:13px;padding:0 3px">A</span><span class="tri" style="border-top-color:#555d66"></span></div>
      <div class="tb d-flex align-items-center justify-content-center"><svg width="15" height="15"><use href="#t-paste"/></svg></div>
      <div class="tb d-flex align-items-center justify-content-center"><svg width="15" height="15"><use href="#t-erase"/></svg></div>
      <div class="tb d-flex align-items-center justify-content-center"><span style="font-size:15px;font-weight:600">Ω</span></div>
      <div class="tb d-flex align-items-center justify-content-center"><svg width="15" height="15"><use href="#t-out"/></svg></div>
      <div class="tb d-flex align-items-center justify-content-center"><svg width="15" height="15"><use href="#t-ind"/></svg></div>
      <div class="tb d-flex align-items-center justify-content-center"><svg width="15" height="15"><use href="#t-undo"/></svg></div>
      <div class="tb d-flex align-items-center justify-content-center"><svg width="15" height="15" style="fill:#b4b9be"><use href="#t-redo"/></svg></div>
      <div class="tb d-flex align-items-center justify-content-center"><svg width="15" height="15"><use href="#t-help"/></svg></div>
     </div>
    </div>
    <div class="edred">Our company.....</div>
    <div class="pathr d-flex align-items-center">p</div>
    <div class="wcnt d-flex align-items-center justify-content-between"><span>Word count: 2</span><span>Draft saved at 2:12:10 am.</span></div>
    <div class="card mbox" style="margin-bottom:19px"><div class="card-header mhead d-flex align-items-center">Yoast SEO<i class="dn"></i></div></div>
    <div class="card mbox" style="height:105px"><div class="card-header mhead d-flex align-items-center">Revolution Slider Options<i></i></div>
     <div style="padding:11px 10px 0;font-size:11.2px;color:#555;line-height:16px">Choose Slide Template
      <div class="selx d-flex" style="width:66px"><select><option>default</option></select><span class="d-flex align-items-center justify-content-center"><svg width="10" height="10"><use href="#i-chev"/></svg></span></div>
     </div>
    </div>
   </div>
   <div class="rc">
    <div class="card mbox" style="height:257px;margin-bottom:18px">
     <div class="card-header mhead d-flex align-items-center">Publish<i></i></div>
     <div class="d-flex justify-content-between" style="padding:9px 5px 2px">
      <div class="redb" style="width:77px"><button class="btn wbtn" style="padding-left:2px">Save Draft</button></div>
      <div class="redb" style="width:62px"><button class="btn wbtn">Preview</button></div>
     </div>
     <div class="psrow d-flex align-items-center"><span class="psic"><svg width="16" height="16"><use href="#p-pin"/></svg></span><span>Status: <b>Draft</b> <a href="#">Edit</a></span></div>
     <div class="psrow d-flex align-items-center"><span class="psic"><svg width="17" height="17"><use href="#p-eye"/></svg></span><span>Visibility: <b>Public</b> <a href="#">Edit</a></span></div>
     <div class="psrow d-flex align-items-center"><span class="psic"><svg width="17" height="17"><use href="#p-cal"/></svg></span><span>Publish <b>immediately</b> <a href="#">Edit</a></span></div>
     <div class="psrow d-flex align-items-center" style="gap:1px"><span class="psic" style="color:#d0202a"><svg width="17" height="17"><use href="#p-y"/></svg></span><span>Readability: <b>Needs improvement</b></span></div>
     <div class="psrow d-flex align-items-center" style="gap:1px"><span class="psic" style="color:#888"><svg width="17" height="17"><use href="#p-y"/></svg></span><span>SEO: <b>Not available</b></span></div>
     <div class="pfoot d-flex align-items-center justify-content-between"><a href="#">Move to Trash</a><button class="btn pub">Publish</button></div>
    </div>
    <div class="card mbox" style="height:283px;margin-bottom:18px">
     <div class="card-header mhead d-flex align-items-center">Page Attributes<i></i></div>
     <div style="padding:13px 10px 0">
      <div class="lab" style="height:27px">Parent</div>
      <div class="selx d-flex" style="width:208px"><select><option>(no parent)</option></select><span class="d-flex align-items-center justify-content-center"><svg width="10" height="10"><use href="#i-chev"/></svg></span></div>
      <div class="lab" style="height:41px;padding-top:13px">Template</div>
      <div class="selx d-flex" style="width:184px"><select><option>Default Template</option></select><span class="d-flex align-items-center justify-content-center"><svg width="10" height="10"><use href="#i-chev"/></svg></span></div>
      <div class="lab" style="height:41px;padding-top:13px">Order</div>
      <div class="selx d-flex align-items-center" style="width:51px;height:25px;padding-left:5px;font-size:12px">0</div>
      <div style="line-height:17px;margin-top:10px;color:#555">Need help? Use the Help tab in the upper right of your screen.</div>
     </div>
    </div>
    <div class="card mbox" style="height:79px;margin-bottom:19px">
     <div class="card-header mhead d-flex align-items-center">Footer Style<i></i></div>
     <div style="padding:5px 11px 0">
      <label class="radr d-flex align-items-center"><input type="radio" name="fs">Straight Footer (Default)</label>
      <label class="radr d-flex align-items-center"><input type="radio" name="fs">Crossed Footer</label>
     </div>
    </div>
    <div class="card mbox" style="height:30px"></div>
   </div>
  </div>
 </main>
 <div class="sbar d-flex flex-column">
  <div class="sarrow d-flex align-items-center justify-content-center"><svg width="10" height="10" viewBox="0 0 10 10"><path fill="none" stroke="#444" stroke-width="1.500" d="M2 6.500L5 3.500l3 3"/></svg></div>
  <div class="sthumb"></div>
  <div class="sgap"></div>
  <div class="sarrow d-flex align-items-center justify-content-center"><svg width="10" height="10" viewBox="0 0 10 10"><path fill="none" stroke="#444" stroke-width="1.500" d="M2 3.500L5 6.500l3-3"/></svg></div>
 </div>
</div>
<div class="botline"></div>
<script src="https://cdn.jsdelivr.net/npm/bootstrap@5.3.0/dist/js/bootstrap.bundle.min.js"></script>
</body></html>
